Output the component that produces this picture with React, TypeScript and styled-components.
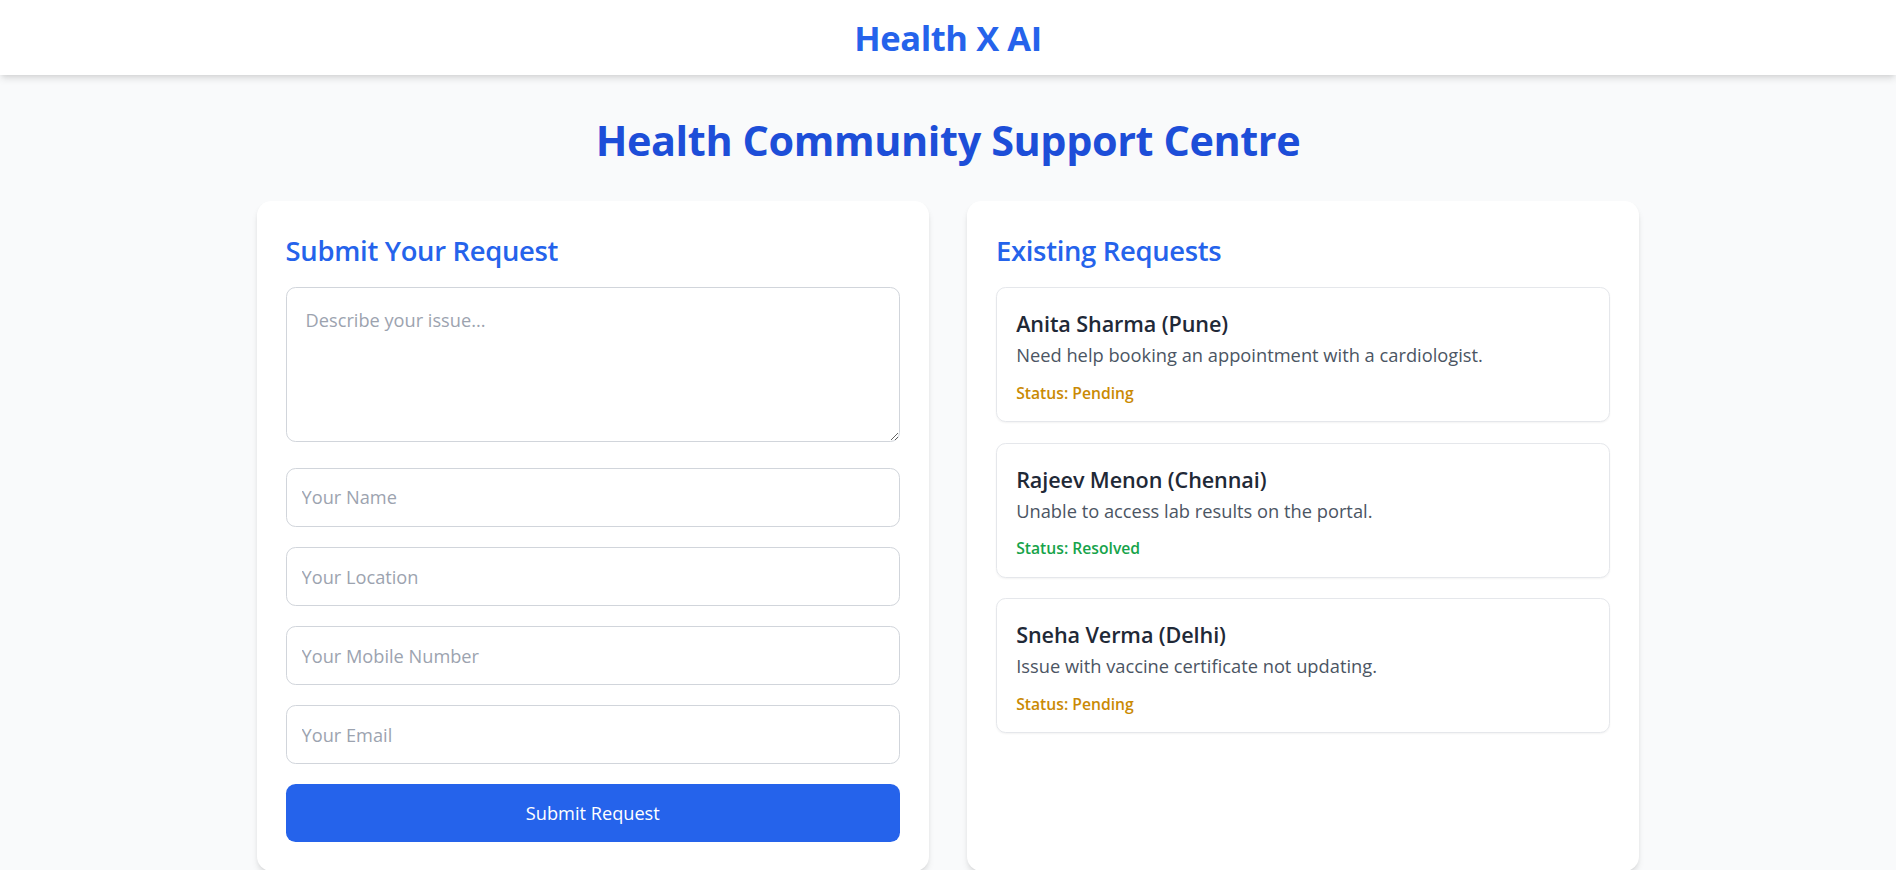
import React from "react";
import styled, { createGlobalStyle } from "styled-components";

const GlobalStyle = createGlobalStyle`
  * { box-sizing: border-box; }
  html, body { margin: 0; padding: 0; }
  body {
    background: #f9fafb;
    font-family: "Open Sans", "Noto Sans", sans-serif;
    color: #1f2937;
  }
`;

const Header = styled.header`
  height: 75px;
  background: #ffffff;
  box-shadow: 0 5px 7px -1px rgba(0, 0, 0, 0.1), 0 2px 5px -2px rgba(0, 0, 0, 0.1);
  display: flex;
  align-items: center;
  justify-content: center;
  position: relative;
  z-index: 1;
`;

const Brand = styled.h1`
  margin: 0;
  font-size: 34.5px;
  line-height: 40px;
  font-weight: 700;
  color: #2563eb;
  letter-spacing: -0.4px;
`;

const Main = styled.main`
  max-width: 1382.4px;
  margin: 0 auto;
  padding-top: 40px;
`;

const Title = styled.h2`
  margin: 0 0 36px;
  text-align: center;
  font-size: 41.4px;
  line-height: 50px;
  font-weight: 700;
  color: #1d4ed8;
  letter-spacing: -0.4px;
`;

const Grid = styled.div`
  display: grid;
  grid-template-columns: 1fr 1fr;
  gap: 38.4px;
`;

const Card = styled.section`
  background: #ffffff;
  border-radius: 14.4px;
  padding: 28.8px;
  padding-top: 30px;
  box-shadow: 0 5px 7px -1px rgba(0, 0, 0, 0.1), 0 2px 5px -2px rgba(0, 0, 0, 0.1);
  display: flex;
  flex-direction: column;
`;

const CardTitle = styled.h3`
  margin: 0 0 16px;
  font-size: 27.4px;
  line-height: 40px;
  font-weight: 600;
  color: #2563eb;
  letter-spacing: -0.3px;
`;

const Form = styled.form`
  display: flex;
  flex-direction: column;
  gap: 19.8px;
`;

const fieldBase = `
  width: 100%;
  border: 1px solid #d1d5db;
  border-radius: 9.6px;
  font-family: "Open Sans", "Noto Sans", sans-serif;
  font-size: 18.2px;
  color: #1f2937;
  background: #ffffff;
  outline: none;
  &::placeholder { color: #9ca3af; }
`;

const TextArea = styled.textarea`
  ${fieldBase}
  display: block;
  height: 155px;
  padding: 17px 19px;
  line-height: 30px;
  margin-bottom: 6px;
  resize: vertical;
`;

const Input = styled.input`
  ${fieldBase}
  display: block;
  height: 59.3px;
  padding: 0 15px;
`;

const SubmitButton = styled.button`
  height: 58px;
  border: none;
  border-radius: 9.6px;
  background: #2563eb;
  color: #ffffff;
  font-family: "Open Sans", "Noto Sans", sans-serif;
  font-size: 18.2px;
  font-weight: 400;
  cursor: pointer;
`;

const List = styled.div`
  display: flex;
  flex-direction: column;
  gap: 20.5px;
`;

const Item = styled.article`
  height: 135px;
  border: 1px solid #e5e7eb;
  border-radius: 9.6px;
  padding: 20px 19.2px 0;
  box-shadow: 0 1px 2px rgba(0, 0, 0, 0.05);
`;

const ItemName = styled.div`
  font-size: 21.6px;
  line-height: 32px;
  font-weight: 600;
  color: #1f2937;
  letter-spacing: -0.1px;
`;

const ItemText = styled.p`
  margin: 0;
  font-size: 18.3px;
  line-height: 30px;
  color: #4b5563;
`;

const Status = styled.div<{ $tone: "pending" | "resolved" }>`
  margin-top: 10.5px;
  font-size: 15.7px;
  line-height: 24px;
  font-weight: 600;
  color: ${(p) => (p.$tone === "pending" ? "#ca8a04" : "#16a34a")};
`;

const requests = [
  {
    name: "Anita Sharma (Pune)",
    text: "Need help booking an appointment with a cardiologist.",
    status: "Pending",
  },
  {
    name: "Rajeev Menon (Chennai)",
    text: "Unable to access lab results on the portal.",
    status: "Resolved",
  },
  {
    name: "Sneha Verma (Delhi)",
    text: "Issue with vaccine certificate not updating.",
    status: "Pending",
  },
];

export default function App() {
  return (
    <>
      <GlobalStyle />
      <Header>
        <Brand>Health X AI</Brand>
      </Header>
      <Main>
        <Title>Health Community Support Centre</Title>
        <Grid>
          <Card>
            <CardTitle>Submit Your Request</CardTitle>
            <Form onSubmit={(e) => e.preventDefault()}>
              <TextArea placeholder="Describe your issue..." />
              <Input placeholder="Your Name" />
              <Input placeholder="Your Location" />
              <Input placeholder="Your Mobile Number" />
              <Input placeholder="Your Email" />
              <SubmitButton type="submit">Submit Request</SubmitButton>
            </Form>
          </Card>
          <Card>
            <CardTitle>Existing Requests</CardTitle>
            <List>
              {requests.map((r) => (
                <Item key={r.name}>
                  <ItemName>{r.name}</ItemName>
                  <ItemText>{r.text}</ItemText>
                  <Status $tone={r.status === "Pending" ? "pending" : "resolved"}>
                    Status: {r.status}
                  </Status>
                </Item>
              ))}
            </List>
          </Card>
        </Grid>
      </Main>
    </>
  );
}
